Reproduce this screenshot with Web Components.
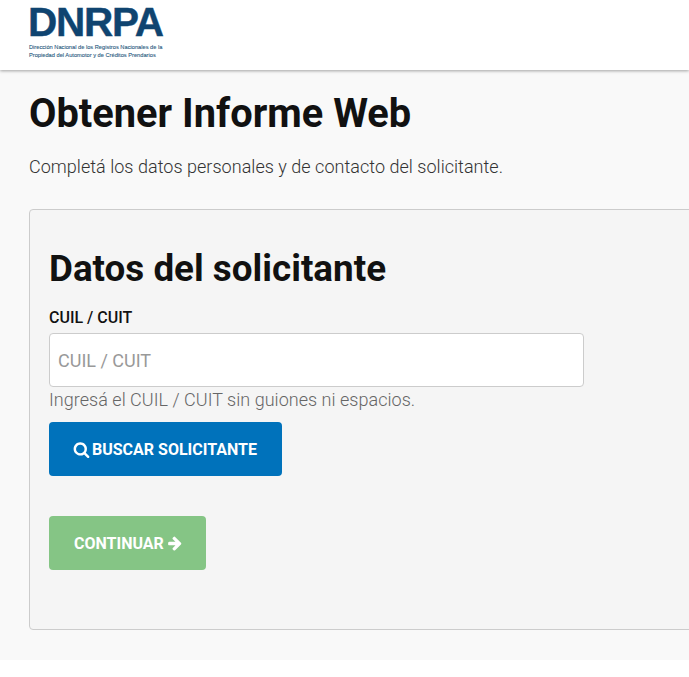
<!DOCTYPE html>
<html lang="es">
<head>
<meta charset="utf-8">
<title>Obtener Informe Web</title>
<style>
  html, body { margin: 0; padding: 0; background: #fff; overflow: hidden; height: 677px; }
  body { font-family: Roboto, "Liberation Sans", sans-serif; }
</style>
</head>
<body>
<site-header></site-header>
<page-main>
  <h-title slot="title">Obtener Informe Web</h-title>
  <span slot="lead">Completá los datos personales y de contacto del solicitante.</span>
  <form-card heading="Datos del solicitante">
    <text-field label="CUIL / CUIT" placeholder="CUIL / CUIT" hint="Ingresá el CUIL / CUIT sin guiones ni espacios."></text-field>
    <action-button kind="search">BUSCAR SOLICITANTE</action-button>
    <action-button kind="next">CONTINUAR</action-button>
  </form-card>
</page-main>

<script>
class SiteHeader extends HTMLElement {
  constructor() {
    super();
    this.attachShadow({ mode: 'open' });
    this.shadowRoot.innerHTML = `
    <style>
      :host {
        display: block;
        position: relative;
        z-index: 1;
        height: 70px;
        background: #fff;
        box-shadow: 0 1px 3px rgba(0,0,0,0.35);
      }
      .logo { padding: 5px 0 0 28px; color: #0f4470; font-family: "Liberation Sans", sans-serif; }
      .mark { font-size: 40.5px; line-height: 35px; font-weight: 700; letter-spacing: -1.25px; -webkit-text-stroke: 0.4px #0f4470; }
      .sub { font-size: 5.7px; line-height: 8px; margin: 2.5px 0 0 1px; color: #2a5a80; -webkit-text-stroke: 0.1px #2a5a80; white-space: nowrap; }
    </style>
    <div class="logo">
      <div class="mark">DNRPA</div>
      <div class="sub">Dirección Nacional de los Registros Nacionales de la<br>Propiedad del Automotor y de Créditos Prendarios</div>
    </div>`
  }
}

class HTitle extends HTMLElement {
  constructor() {
    super();
    this.attachShadow({ mode: 'open' });
    this.shadowRoot.innerHTML = `
    <style>
      :host { display: block; font-size: 39.8px; line-height: 40px; font-weight: 700; color: #111; }
    </style>
    <slot></slot>`
  }
}

class PageMain extends HTMLElement {
  constructor() {
    super();
    this.attachShadow({ mode: 'open' });
    this.shadowRoot.innerHTML = `
    <style>
      :host {
        display: block;
        height: 590px;
        background: #f9f9f9;
        padding: 24px 0 0 29px;
        box-sizing: border-box;
        overflow: hidden;
      }
      .lead {
        margin: 20px 0 29px;
        font-size: 18px;
        line-height: 26px;
        font-weight: 300;
        letter-spacing: 0.03px;
        color: #333;
      }
    </style>
    <slot name="title"></slot>
    <div class="lead"><slot name="lead"></slot></div>
    <slot></slot>`
  }
}

class FormCard extends HTMLElement {
  constructor() {
    super();
    this.attachShadow({ mode: 'open' });
    this.shadowRoot.innerHTML = `
    <style>
      :host {
        display: block;
        width: 720px;
        height: 421px;
        box-sizing: border-box;
        background: #f5f5f5;
        border: 1px solid #ccc;
        border-radius: 4px;
        padding: 39px 19px 0;
      }
      h2 { margin: 0 0 18px; font-size: 36.8px; line-height: 40px; font-weight: 700; color: #111; }
      .body { display: flex; flex-direction: column; align-items: flex-start; gap: 40px; }
    </style>
    <h2></h2>
    <div class="body"><slot></slot></div>`
    this.shadowRoot.querySelector('h2').textContent = this.getAttribute('heading')
  }
}

class TextField extends HTMLElement {
  constructor() {
    super();
    this.attachShadow({ mode: 'open' });
    this.shadowRoot.innerHTML = `
    <style>
      :host { display: block; margin-bottom: -31px; }
      label { display: block; font-size: 16px; line-height: 22px; font-weight: 500; color: #111; margin-bottom: 4px; }
      input {
        display: block;
        width: 535px;
        height: 54px;
        box-sizing: border-box;
        padding: 0 8px;
        font: 400 18px Roboto, sans-serif;
        color: #333;
        background: #fff;
        border: 1px solid #ccc;
        border-radius: 4px;
      }
      input::placeholder { color: #999; opacity: 1; }
      .hint { font-size: 18px; line-height: 26px; font-weight: 300; letter-spacing: 0.03px; color: #666; }
    </style>
    <label for="f"></label>
    <input id="f" type="text">
    <div class="hint"></div>`
    this.shadowRoot.querySelector('label').textContent = this.getAttribute('label')
    this.shadowRoot.querySelector('input').placeholder = this.getAttribute('placeholder')
    this.shadowRoot.querySelector('.hint').textContent = this.getAttribute('hint')
  }
}

class ActionButton extends HTMLElement {
  constructor() {
    super();
    const kind = this.getAttribute('kind')
    // font-awesome style glyphs on a 1792 grid
    const search = `<svg class="ic" style="margin:0 -1px 0 -1px" width="17" height="17" viewBox="0 0 1792 1792"><path fill="#fff" d="M1216 832q0-185-131.500-316.500t-316.500-131.500-316.500 131.500-131.500 316.500 131.500 316.500 316.500 131.500 316.500-131.500 131.500-316.500zm512 832q0 52-38 90t-90 38q-54 0-90-38l-343-342q-179 124-399 124-143 0-273.500-55.500t-225-150-150-225-55.500-273.500 55.500-273.500 150-225 225-150 273.500-55.500 273.500 55.500 225 150 150 225 55.500 273.500q0 220-124 399l343 343q37 37 37 90z"/></svg>`
    const next = `<svg class="ic" style="margin:0 -2px 0 0" width="16" height="16" viewBox="0 0 1792 1792"><path fill="#fff" d="M1600 960q0 54-37 91l-651 651q-39 37-91 37-51 0-90-37l-75-75q-38-38-38-91t38-91l293-293h-704q-52 0-84.500-37.500t-32.500-90.500v-128q0-53 32.500-90.500t84.500-37.500h704l-293-294q-38-36-38-90t38-90l75-75q38-38 90-38 53 0 91 38l651 651q37 35 37 90z"/></svg>`
    this.attachShadow({ mode: 'open' });
    this.shadowRoot.innerHTML = `
    <style>
      :host { display: block; }
      button {
        display: flex;
        align-items: center;
        gap: 3px;
        height: 54px;
        padding: 0 25px;
        border: none;
        border-radius: 4px;
        font: 700 16px Roboto, sans-serif;
        color: #fff;
        background: ${kind === 'search' ? '#0072bb' : '#85c585'};
      }
    </style>
    <button>${kind === 'search' ? search : ''}<slot></slot>${kind === 'next' ? next : ''}</button>`
  }
}

customElements.define('site-header', SiteHeader)
customElements.define('h-title', HTitle)
customElements.define('page-main', PageMain)
customElements.define('form-card', FormCard)
customElements.define('text-field', TextField)
customElements.define('action-button', ActionButton)
</script>
</body>
</html>
